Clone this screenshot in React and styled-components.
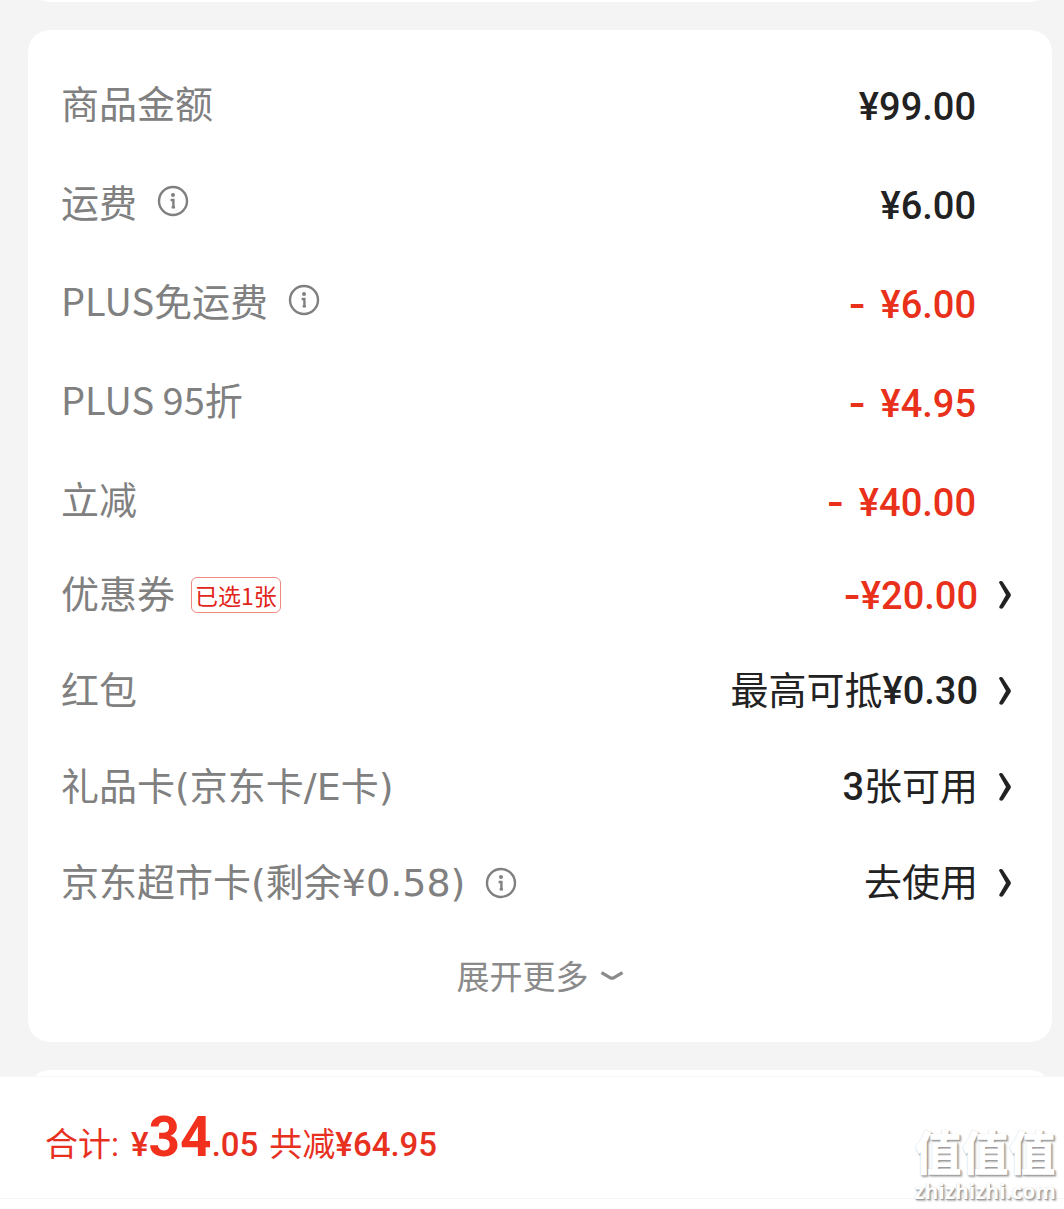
import React from "react";
import styled, { createGlobalStyle } from "styled-components";

const GlobalStyle = createGlobalStyle`
  * {
    box-sizing: border-box;
  }

  body {
    margin: 0;
    background: #f4f4f4;
    font-family: "Noto Sans CJK SC", sans-serif;
  }

  button {
    display: flex;
    align-items: center;
    margin: 0;
    padding: 0;
    border: none;
    background: none;
    color: inherit;
    font: inherit;
    cursor: pointer;
  }
`;

const Page = styled.div`
  display: flex;
  flex-direction: column;
  min-height: 100vh;
`;

const Peek = styled.div`
  display: flex;
  align-items: ${props => (props.$end ? "flex-end" : "flex-start")};
  height: ${props => (props.$end ? "2px" : "6px")};
  padding: 0 12px 0 28px;
  overflow: hidden;
`;

const PeekCard = styled.div`
  flex: 1 0 auto;
  height: 48px;
  border-radius: 22px;
  background: #fff;
`;

const Card = styled.main`
  margin: 28px 12px 28px 28px;
  padding: 22px 0 24px;
  border-radius: 22px;
  background: #fff;
`;

const List = styled.ul`
  margin: 0;
  padding: 0;
  list-style: none;
`;

const Row = styled.li`
  display: flex;
  align-items: center;
  justify-content: space-between;
  height: ${props => (props.$action ? "96px" : "99px")};
  padding: 0 ${props => (props.$action ? "40px" : "76px")} 0 33px;
  font-size: 38px;
  line-height: 48px;
`;

const Label = styled.div`
  display: flex;
  align-items: center;
  color: #808080;
  font-family: ${props => (props.$wide ? '"DejaVu Sans", ' : "")}"Noto Sans CJK SC", sans-serif;
`;

const InfoButton = styled.button`
  && {
    margin-left: 20px;
  }
`;

const Badge = styled.span`
  margin-left: 16px;
  padding: 0 3px;
  border: 1px solid #ee8a80;
  border-radius: 6px;
  color: #e1251b;
  font-family: "Noto Sans CJK SC", sans-serif;
  font-size: 23px;
  line-height: 34px;
`;

const Value = styled.span`
  padding-top: ${props => (props.$low ? "10px" : "0")};
  color: ${props => (props.$red ? "#e8301a" : "#222")};
  font-family: Roboto, "Noto Sans CJK SC", sans-serif;
  font-weight: 500;
  white-space: pre;
`;

const Dash = styled.span`
  margin-right: ${props => (props.$spaced ? "5px" : "0")};
  font-family: Inter, sans-serif;
  font-weight: 600;
`;

const Han = styled.span`
  font-weight: 400;
`;

const ActionButton = styled.button`
  && {
    gap: 20px;
  }
`;

const More = styled.button`
  && {
    justify-content: center;
    gap: 11px;
    width: 100%;
    height: 87px;
    color: #8a8a8a;
    font-size: 33px;
    line-height: 40px;
  }
`;

const Footer = styled.footer`
  position: relative;
  flex: 1;
  padding-bottom: 10px;
  border-top: 1px solid #f7f7f7;
  background: #fff;
`;

const Total = styled.div`
  display: flex;
  align-items: baseline;
  height: 122px;
  padding: 24px 45px 0;
  border-bottom: 1px solid #f5f5f5;
  color: #e8301f;
  font-family: Roboto, "Noto Sans CJK SC", sans-serif;
  font-size: 33px;
  font-weight: 500;
  line-height: 72px;
`;

const Price = styled.span`
  margin: 0 11px 0 12px;
`;

const Whole = styled.strong`
  color: #f2301e;
  font-size: 55px;
  font-weight: 700;
`;

const Watermark = styled.div`
  position: absolute;
  right: 8px;
  bottom: 6px;
  display: flex;
  flex-direction: column;
  align-items: center;
  gap: 3px;
  color: #fff;
  text-shadow: 1px 1px 1px #999, 2px 2px 2px #bbb, 0 0 1px #ccc;
`;

const WatermarkName = styled.span`
  font-size: 47px;
  font-weight: 900;
  line-height: 52px;
`;

const WatermarkSite = styled.span`
  font-family: "Open Sans", sans-serif;
  font-size: 21px;
  font-weight: 700;
  line-height: 24px;
`;

const InfoIcon = () => (
  <svg width="32" height="32" viewBox="0 0 32 32" fill="none" stroke="#808080">
    <circle cx="16" cy="16" r="14" strokeWidth="2.4" />
    <circle cx="16" cy="10" r="2" fill="#808080" stroke="none" />
    <path d="M13.6 15h2.8v7.600M14.600 22.400h3.400" strokeWidth="2.4" />
  </svg>
);

const ArrowIcon = () => (
  <svg width="14" height="30" viewBox="0 0 14 30" fill="#222">
    <path d="M1 2.4C1.6.8 4 .6 5 2.2l7.4 11.2c.6 1 .6 2.2 0 3.2L5 28c-1 1.4-4 .8-3.8-1.2L8 15z" />
  </svg>
);

const DownIcon = () => (
  <svg width="24" height="14" viewBox="0 0 24 14" fill="none" stroke="#8a8a8a">
    <path d="M1.5 4.6 10 9.6q2 1.2 4 0l8.5-5" strokeWidth="3.2" />
  </svg>
);

const fees = [
  { label: "商品金额", value: "¥99.00" },
  { label: "运费", value: "¥6.00", info: true },
  { label: "PLUS免运费", value: "¥6.00", info: true, minus: true },
  { label: "PLUS 95折", value: "¥4.95", minus: true },
  { label: "立减", value: "¥40.00", minus: true }
];

const assets = [
  { label: "优惠券", badge: "已选1张", value: "¥20.00", minus: true },
  { label: "红包", before: "最高可抵", value: "¥0.30" },
  { label: "礼品卡(京东卡/E卡)", value: "3", after: "张可用" },
  { label: "京东超市卡(剩余¥0.58)", info: true, after: "去使用" }
];

const Info = ({ label }) => (
  <InfoButton type="button" aria-label={`${label}说明`}>
    <InfoIcon />
  </InfoButton>
);

export default function App() {
  return (
    <Page>
      <GlobalStyle />
      <Peek $end>
        <PeekCard />
      </Peek>

      <Card>
        <List>
          {fees.map(({ label, value, info, minus }) => (
            <Row key={label}>
              <Label>
                {label}
                {info && <Info label={label} />}
              </Label>
              <Value $low $red={minus}>
                {minus && <Dash $spaced>{"- "}</Dash>}
                {value}
              </Value>
            </Row>
          ))}
          {assets.map(({ label, badge, info, minus, before, value, after }) => (
            <Row key={label} $action>
              <Label $wide>
                {label}
                {badge && <Badge>{badge}</Badge>}
                {info && <Info label={label} />}
              </Label>
              <ActionButton type="button">
                <Value $red={minus}>
                  {minus && <Dash>-</Dash>}
                  {before && <Han>{before}</Han>}
                  {value}
                  {after && <Han>{after}</Han>}
                </Value>
                <ArrowIcon />
              </ActionButton>
            </Row>
          ))}
        </List>
        <More type="button">
          展开更多
          <DownIcon />
        </More>
      </Card>

      <Peek>
        <PeekCard />
      </Peek>

      <Footer>
        <Total>
          <Han>合计:</Han>
          <Price>
            ¥<Whole>34</Whole>.05
          </Price>
          <span>
            <Han>共减</Han>¥64.95
          </span>
        </Total>
        <Watermark>
          <WatermarkName>值值值</WatermarkName>
          <WatermarkSite>zhizhizhi.com</WatermarkSite>
        </Watermark>
      </Footer>
    </Page>
  );
}
